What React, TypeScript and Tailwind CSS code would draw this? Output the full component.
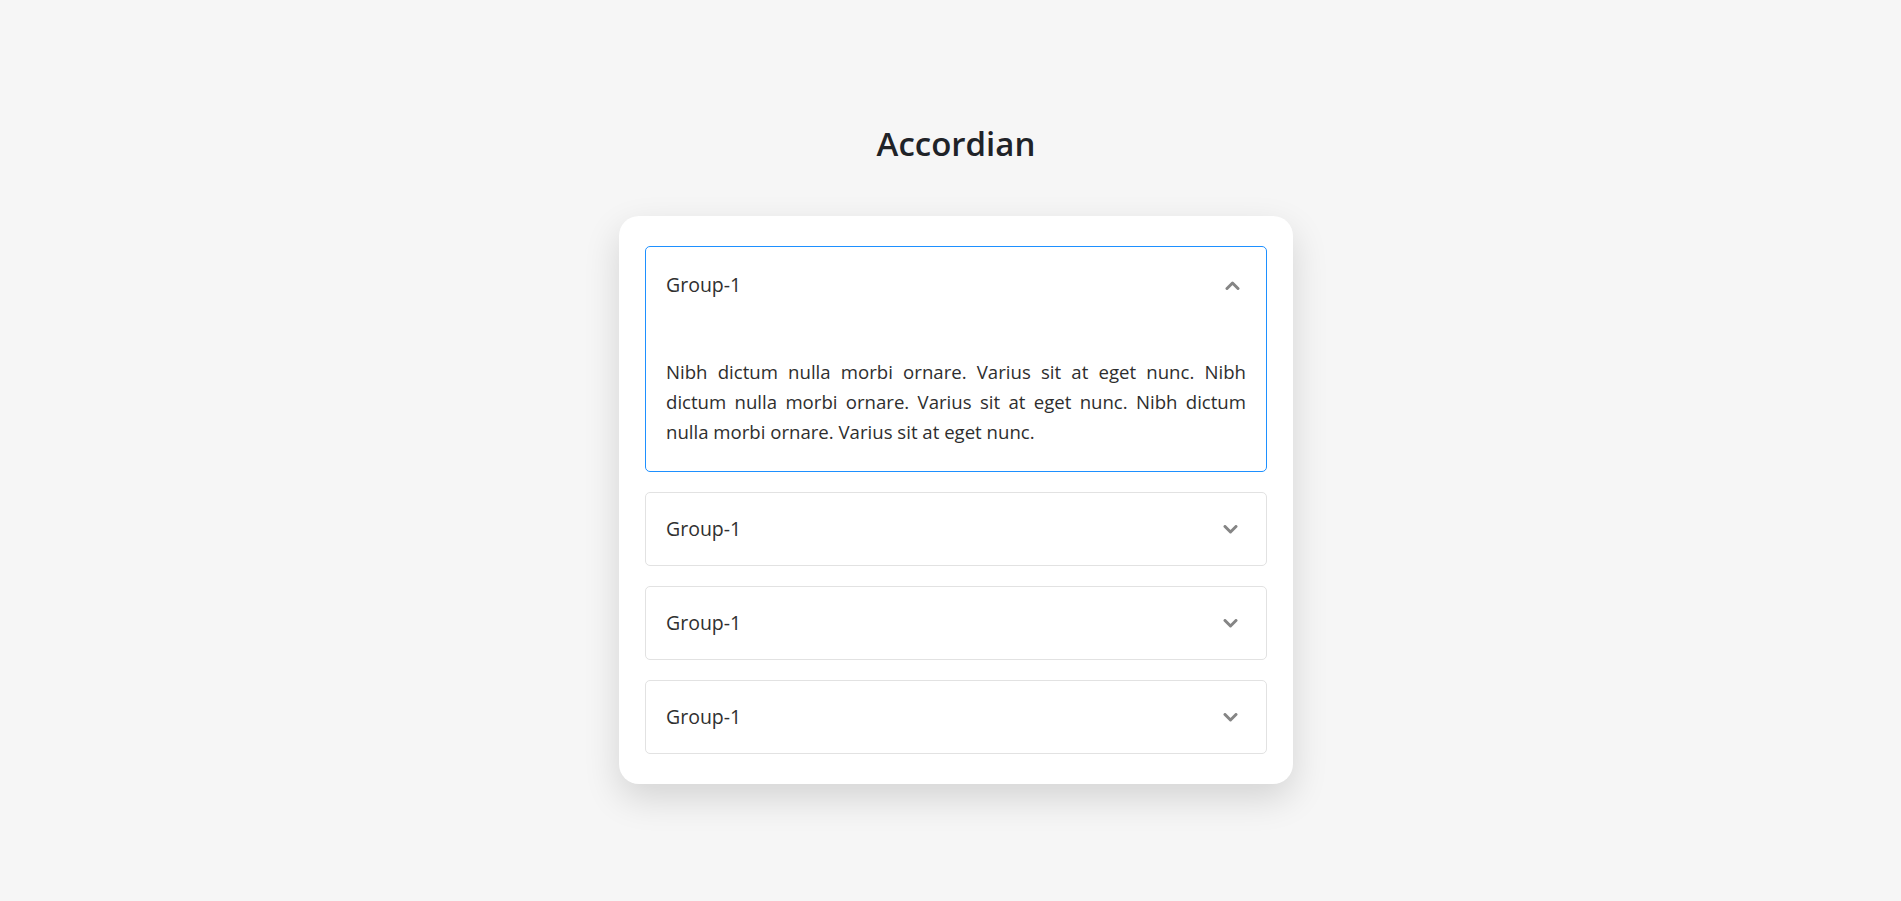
import React, { useState } from "react";

const Chevron = ({ up }: { up: boolean }) => (
  <svg width="15" height="9" viewBox="0 0 15 9" className="block">
    {up ? (
      <polyline points="2,7.5 7.5,2 13,7.5" fill="none" stroke="#858585" strokeWidth="3" strokeLinecap="round" strokeLinejoin="round" />
    ) : (
      <polyline points="2,1.5 7.5,7 13,1.5" fill="none" stroke="#858585" strokeWidth="3" strokeLinecap="round" strokeLinejoin="round" />
    )}
  </svg>
);

const lines = [
  "Nibh dictum nulla morbi ornare. Varius sit at eget nunc. Nibh",
  "dictum nulla morbi ornare. Varius sit at eget nunc. Nibh dictum",
  "nulla morbi ornare. Varius sit at eget nunc.",
];

export default function App() {
  const [open, setOpen] = useState<number>(0);
  const items = [0, 1, 2, 3];
  return (
    <div
      className="min-h-[901px] w-full bg-[#f6f6f6] pl-[11px] pt-[124px] flex flex-col items-center"
      style={{ fontFamily: '"Open Sans", "Noto Sans", sans-serif' }}
    >
      <h1 className="text-[33px] leading-[40px] font-semibold text-[#1f2328]">Accordian</h1>
      <div className="mt-[52px] w-[674px] bg-white rounded-[20px] px-[26px] py-[30px] shadow-[0_14px_36px_rgba(0,0,0,0.14)] flex flex-col gap-[20px]">
        {items.map((i) => {
          const isOpen = open === i;
          return (
            <div
              key={i}
              className={
                isOpen
                  ? "border border-[#1e90ff] rounded-[5px] bg-white"
                  : "border border-[#e2e2e2] rounded-[5px] bg-white"
              }
            >
              <button
                type="button"
                onClick={() => setOpen(isOpen ? -1 : i)}
                className={
                  isOpen
                    ? "w-full h-[74px] pt-[2px] pl-[20px] pr-[26px] flex items-center justify-between text-left cursor-pointer"
                    : "w-full h-[72px] pl-[20px] pr-[28px] flex items-center justify-between text-left cursor-pointer"
                }
              >
                <span className="text-[19.5px] leading-[24px] text-[#303030]">Group-1</span>
                <Chevron up={isOpen} />
              </button>
              {isOpen && (
                <div className="pl-[20px] pr-[20px] pt-[36px] pb-[24px] text-[18.6px] leading-[30px] text-[#2e2e2e]">
                  <p className="m-0 text-justify">
                    <span className="block text-justify [text-align-last:justify]">{lines[0]}</span>
                    <span className="block text-justify [text-align-last:justify]">{lines[1]}</span>
                    <span className="block text-left">{lines[2]}</span>
                  </p>
                </div>
              )}
            </div>
          );
        })}
      </div>
    </div>
  );
}
